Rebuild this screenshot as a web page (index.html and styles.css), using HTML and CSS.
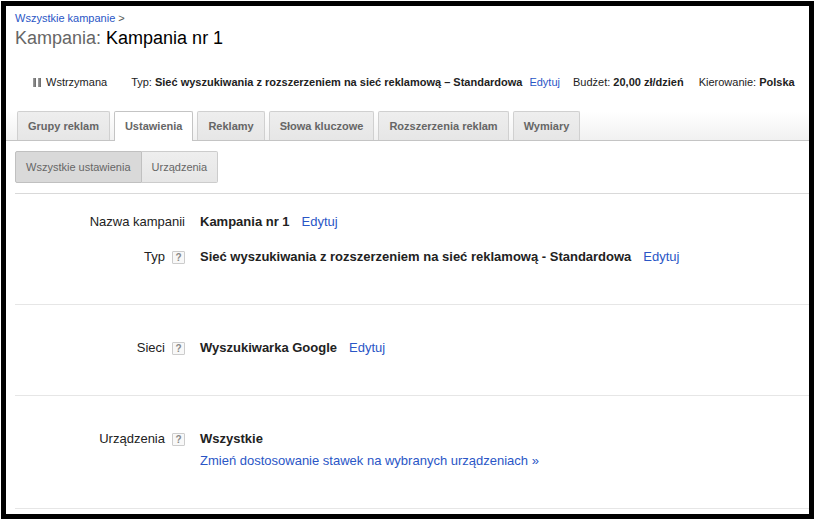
FILE: index.html
```html
<!DOCTYPE html>
<html lang="pl">
<head>
<meta charset="utf-8">
<title>Kampania nr 1</title>
<link rel="stylesheet" href="styles.css">
</head>
<body>
<div class="frame">
  <header class="header">
    <nav class="breadcrumb"><a href="#">Wszystkie kampanie</a> <span class="crumb-arrow">&gt;</span></nav>
    <h1 class="title"><span class="title-label">Kampania:</span> Kampania nr 1</h1>
  </header>
  <div class="summary">
    <span class="status">
      <svg class="pause" viewBox="0 0 8 9" aria-hidden="true">
        <defs><linearGradient id="bar"><stop offset="0" stop-color="#a0a0a0"/><stop offset="1" stop-color="#686868"/></linearGradient></defs>
        <rect x="0" y="0" width="3" height="9" fill="url(#bar)"/>
        <rect x="5" y="0" width="3" height="9" fill="url(#bar)"/>
      </svg>
      Wstrzymana
    </span>
    <span class="type">Typ: <b>Sieć wyszukiwania z rozszerzeniem na sieć reklamową – Standardowa</b></span>
    <a class="type-edit" href="#">Edytuj</a>
    <span class="budget">Budżet: <b>20,00 zł/dzień</b></span>
    <span class="target">Kierowanie: <b>Polska</b></span>
  </div>
  <nav class="tabs">
    <a class="tab" href="#">Grupy reklam</a>
    <a class="tab tab-active" href="#">Ustawienia</a>
    <a class="tab" href="#">Reklamy</a>
    <a class="tab" href="#">Słowa kluczowe</a>
    <a class="tab" href="#">Rozszerzenia reklam</a>
    <a class="tab" href="#">Wymiary</a>
  </nav>
  <main class="content">
    <div class="switch">
      <button class="switch-button pressed" type="button">Wszystkie ustawienia</button>
      <button class="switch-button" type="button">Urządzenia</button>
    </div>
    <section class="section section-first">
      <div class="row">
        <div class="label">Nazwa kampanii</div>
        <div class="value"><b>Kampania nr 1</b><a class="edit" href="#">Edytuj</a></div>
      </div>
      <div class="row">
        <div class="label">Typ <button class="help" type="button">?</button></div>
        <div class="value"><b>Sieć wyszukiwania z rozszerzeniem na sieć reklamową - Standardowa</b><a class="edit" href="#">Edytuj</a></div>
      </div>
    </section>
    <section class="section">
      <div class="row">
        <div class="label">Sieci <button class="help" type="button">?</button></div>
        <div class="value"><b>Wyszukiwarka Google</b><a class="edit" href="#">Edytuj</a></div>
      </div>
    </section>
    <section class="section">
      <div class="row">
        <div class="label">Urządzenia <button class="help" type="button">?</button></div>
        <div class="value"><b>Wszystkie</b><br><a href="#">Zmień dostosowanie stawek na wybranych urządzeniach »</a></div>
      </div>
    </section>
  </main>
</div>
</body>
</html>
```
FILE: styles.css
```css
* {
  box-sizing: border-box;
}

body {
  margin: 0;
  padding: 1px;
  background: #fff;
  color: #222;
  font-family: "Liberation Sans", Arial, sans-serif;
  font-size: 13px;
  line-height: 22px;
}

a {
  color: #2a56c6;
  text-decoration: none;
}

.frame {
  border: 5px solid #000;
  padding-bottom: 5px;
}

.header {
  padding: 5px 9px 0;
}

.breadcrumb {
  font-size: 11px;
  line-height: 14px;
}

.crumb-arrow {
  color: #555;
}

.title {
  margin: 0;
  font-size: 18px;
  font-weight: normal;
  line-height: 26px;
  color: #000;
}

.title-label {
  color: #666;
}

.summary {
  display: flex;
  align-items: center;
  padding: 0 15px 0 27px;
  margin-top: 24px;
  font-size: 11px;
  line-height: 14px;
  white-space: nowrap;
}

.status {
  display: flex;
  align-items: center;
  gap: 5px;
}

.pause {
  width: 8px;
  height: 9px;
}

.type {
  margin-left: 24px;
}

.type-edit {
  margin-left: 7px;
}

.budget {
  margin-left: 13px;
}

.target {
  margin-left: 15px;
}

.tabs {
  display: flex;
  gap: 4px;
  margin-top: 22px;
  padding: 0 11px;
  border-bottom: 1px solid #c4c4c4;
  background: linear-gradient(#fff, #f1f1f1);
}

.tab {
  padding: 0 10px;
  border: 1px solid #d0d0d0;
  border-bottom: 0;
  border-radius: 2px 2px 0 0;
  background: linear-gradient(#eee, #e6e6e6);
  color: #666;
  font-size: 11px;
  font-weight: bold;
  line-height: 28px;
  white-space: nowrap;
}

.tab-active {
  margin-bottom: -1px;
  border-color: #c4c4c4;
  background: #fff;
}

.content {
  padding-left: 9px;
}

.switch {
  display: flex;
  padding: 10px 0;
  border-bottom: 1px solid #d9d9d9;
}

.switch-button {
  height: 32px;
  margin: 0;
  padding: 0 10px;
  border: 1px solid #ccc;
  border-left: 0;
  border-radius: 0 2px 2px 0;
  background: linear-gradient(#eee, #e6e6e6);
  color: #666;
  font: inherit;
  font-size: 11px;
}

.pressed {
  border: 1px solid #c0c0c0;
  border-radius: 2px 0 0 2px;
  background: #d9d9d9;
}

.section {
  display: grid;
  gap: 13px;
  padding: 32px 0 36px;
  border-bottom: 1px solid #e6e6e6;
}

.section-first {
  padding-top: 17px;
}

.row {
  display: grid;
  grid-template-columns: 170px 1fr;
  gap: 15px;
}

.label {
  display: flex;
  align-items: center;
  justify-content: flex-end;
  gap: 7px;
  height: 22px;
}

.edit {
  margin-left: 12px;
}

.help {
  width: 13px;
  height: 13px;
  padding: 0;
  border: 1px solid #ccc;
  border-radius: 1px;
  background: #f8f8f8;
  color: #888;
  font: bold 10px/11px "Liberation Sans", Arial, sans-serif;
  text-align: center;
}
```
